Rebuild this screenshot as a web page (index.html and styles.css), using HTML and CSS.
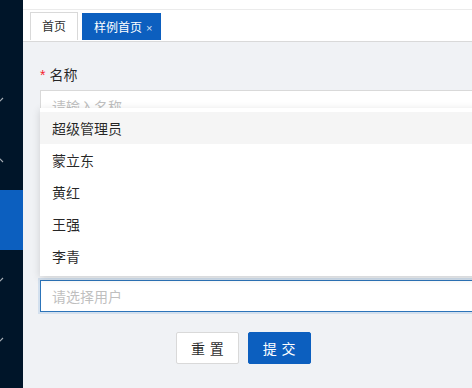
FILE: index.html
```html
<!DOCTYPE html>
<html lang="zh-CN">
<head>
    <meta charset="UTF-8">
    <meta name="viewport" content="width=device-width, initial-scale=1.0">
    <title>样例首页</title>
    <link rel="stylesheet" href="styles.css">
</head>
<body>

    <aside class="sidebar">
        <div class="menu-item">
            <svg class="arrow" width="10" height="6" viewBox="0 0 10 6"><path d="M1 1l4 4 4-4" fill="none" stroke="currentColor" stroke-width="1.2"/></svg>
        </div>
        <div class="menu-item">
            <svg class="arrow" width="10" height="6" viewBox="0 0 10 6"><path d="M1 5l4-4 4 4" fill="none" stroke="currentColor" stroke-width="1.2"/></svg>
        </div>
        <div class="menu-item active"></div>
        <div class="menu-item">
            <svg class="arrow" width="10" height="6" viewBox="0 0 10 6"><path d="M1 1l4 4 4-4" fill="none" stroke="currentColor" stroke-width="1.2"/></svg>
        </div>
        <div class="menu-item">
            <svg class="arrow" width="10" height="6" viewBox="0 0 10 6"><path d="M1 1l4 4 4-4" fill="none" stroke="currentColor" stroke-width="1.2"/></svg>
        </div>
    </aside>

    <main class="main">
        <header class="header"></header>

        <nav class="tabs">
            <div class="tab">首页</div>
            <div class="tab current">样例首页<span class="tab-close">×</span></div>
        </nav>

        <section class="content">
            <form class="form">
                <div class="form-item">
                    <label class="form-label"><span class="required">*</span>名称</label>
                    <input class="input" type="text" placeholder="请输入名称">
                </div>

                <!-- sits under the open dropdown -->
                <div class="form-item">
                    <textarea class="textarea" aria-label="描述"></textarea>
                </div>

                <div class="form-item last">
                    <div class="select-wrap">
                        <div class="select focused">请选择用户</div>
                        <ul class="dropdown">
                            <li class="option hover">超级管理员</li>
                            <li class="option">蒙立东</li>
                            <li class="option">黄红</li>
                            <li class="option">王强</li>
                            <li class="option">李青</li>
                        </ul>
                    </div>
                </div>

                <div class="form-actions">
                    <button type="button" class="btn"><span>重置</span></button>
                    <button type="button" class="btn btn-primary"><span>提交</span></button>
                </div>
            </form>
        </section>
    </main>

</body>
</html>
```

FILE: styles.css
```css
* {
    box-sizing: border-box;
    margin: 0;
    padding: 0;
}

body {
    display: flex;
    height: 100vh;
    overflow: hidden;
    font-family: "Noto Sans CJK SC", "Noto Sans", sans-serif;
    font-size: 14px;
    color: rgba(0, 0, 0, 0.85);
    background: #f0f2f5;
}

/* Sidebar */
.sidebar {
    flex: 0 0 23px;
    padding-top: 70px;
    background: #001529;
    overflow: hidden;
}

.menu-item {
    height: 60px;
    display: flex;
    align-items: center;
    color: rgba(255, 255, 255, 0.65);
}

.menu-item.active {
    background: #0c5fbf;
}

.arrow {
    margin-left: -6px;
}

/* Main area */
.main {
    flex: 1;
    display: flex;
    flex-direction: column;
    min-width: 0;
}

.header {
    height: 10px;
    background: #fff;
    border-bottom: 1px solid #ebebeb;
}

.tabs {
    height: 32px;
    display: flex;
    align-items: flex-end;
    gap: 4px;
    padding: 0 0 1px 7px;
    background: #fff;
    border-bottom: 1px solid #d9d9d9;
}

.tab {
    height: 28px;
    line-height: 26px;
    padding: 0 11px;
    font-size: 12px;
    background: #fff;
    border: 1px solid #d9d9d9;
    border-bottom: none;
}

.tab.current {
    height: 27px;
    padding: 0 8px 0 11px;
    color: #fff;
    background: #0c5fbf;
    border-color: #0c5fbf;
}

.tab-close {
    margin-left: 4px;
    font-family: "Liberation Sans", sans-serif;
    font-size: 11px;
    color: rgba(255, 255, 255, 0.8);
}

/* Form */
.content {
    padding: 16px 0 0 17px;
}

.form {
    width: 620px;
}

.form-item {
    margin-bottom: 24px;
}

.form-item.last {
    margin-bottom: 20px;
}

.form-label {
    display: block;
    height: 32px;
    line-height: 32px;
}

.required {
    margin-right: 4px;
    color: #f5222d;
    font-family: SimSun, "Liberation Sans", sans-serif;
}

.input,
.select,
.textarea {
    display: block;
    width: 100%;
    height: 32px;
    padding: 4px 11px;
    font: inherit;
    color: rgba(0, 0, 0, 0.85);
    background: #fff;
    border: 1px solid #d9d9d9;
    outline: none;
}

.textarea {
    height: 110px;
    resize: none;
}

.input::placeholder {
    color: #bfbfbf;
}

.select {
    line-height: 22px;
    color: #bfbfbf;
}

.select.focused {
    border-color: #2c74b9;
    box-shadow: 0 0 0 2px rgba(12, 95, 191, 0.12);
}

.select-wrap {
    position: relative;
}

/* Dropdown opens above the select */
.dropdown {
    position: absolute;
    left: 0;
    right: 0;
    bottom: calc(100% + 4px);
    padding: 4px 0;
    list-style: none;
    background: #fff;
    box-shadow: 0 2px 8px rgba(0, 0, 0, 0.15);
}

.option {
    height: 32px;
    line-height: 32px;
    padding: 0 12px;
}

.option.hover {
    background: #f5f5f5;
}

/* Buttons */
.form-actions {
    display: flex;
    gap: 9px;
    padding-left: 136px;
}

.btn {
    height: 32px;
    padding: 0 14px;
    font: inherit;
    white-space: nowrap;
    color: rgba(0, 0, 0, 0.85);
    background: #fff;
    border: 1px solid #d9d9d9;
    border-radius: 2px;
    cursor: pointer;
}

.btn span {
    display: inline-block;
    letter-spacing: 0.34em;
    margin-right: -0.34em;
}

.btn-primary {
    color: #fff;
    background: #0c5fbf;
    border-color: #0c5fbf;
}
```
